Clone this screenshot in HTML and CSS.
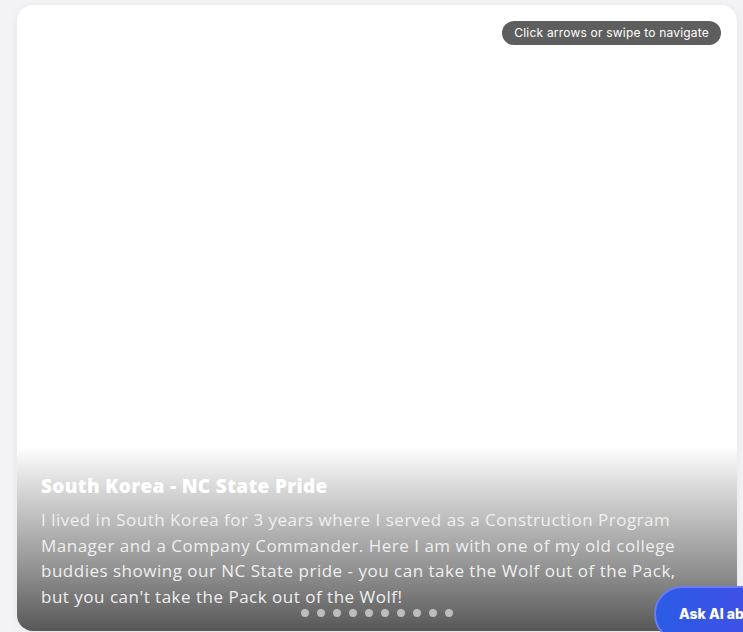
FILE: index.html
```html
<!DOCTYPE html>
<html>
<head>
<meta charset="utf-8">
<link rel="stylesheet" href="styles.css">
</head>
<body>
<div class="page">
  <div class="card">
    <div class="hint">Click arrows or swipe to navigate</div>
    <div class="caption">
      <h2 class="title">South Korea - NC State Pride</h2>
      <p class="desc">I lived in South Korea for 3 years where I served as a Construction Program Manager and a Company Commander. Here I am with one of my old college buddies showing our NC State pride - you can take the Wolf out of the Pack, but you can't take the Pack out of the Wolf!</p>
      <div class="dots">
        <span class="dot"></span><span class="dot"></span><span class="dot"></span><span class="dot"></span><span class="dot"></span><span class="dot"></span><span class="dot"></span><span class="dot"></span><span class="dot"></span><span class="dot"></span>
      </div>
    </div>
  </div>
  <button class="ask">Ask AI about this photo</button>
</div>
</body>
</html>
```
FILE: styles.css
```css
* { box-sizing: border-box; }
html, body { margin: 0; padding: 0; }
body {
  background: #f3f3f6;
  width: 743px;
  height: 632px;
  overflow: hidden;
  font-family: "Open Sans", "Liberation Sans", sans-serif;
}
.page {
  position: relative;
  height: 632px;
  padding: 5px 6px 0 17px;
}
.card {
  position: relative;
  background: #fff;
  border-radius: 16px;
  height: 626px;
  box-shadow: 0 2px 10px rgba(0,0,0,0.06);
  display: flex;
  flex-direction: column;
  justify-content: space-between;
  overflow: hidden;
}
.hint {
  align-self: flex-end;
  margin: 16px 16px 0 0;
  height: 24px;
  padding: 0 12px;
  border-radius: 12px;
  background: #5e5e5e;
  color: #fff;
  font-size: 12px;
  letter-spacing: 0.2px;
  line-height: 24px;
  font-family: "Inter", "Liberation Sans", sans-serif;
}
.caption {
  padding: 28px 56px 14px 24px;
  background: linear-gradient(to bottom, rgba(0,0,0,0) 0%, rgba(0,0,0,0.2) 30%, rgba(0,0,0,0.45) 70%, rgba(0,0,0,0.66) 100%);
  color: #f0f0f0;
  height: 185px;
}
.title {
  margin: 0 0 9px;
  font-size: 19px;
  font-weight: 800;
  letter-spacing: 0.35px;
  color: #fff;
  line-height: 24px;
  font-family: "Open Sans", "Liberation Sans", sans-serif;
}
.desc {
  margin: 0;
  font-size: 17px;
  letter-spacing: 0.5px;
  line-height: 25.7px;
  color: #efefef;
}
.dots {
  display: flex;
  justify-content: center;
  gap: 8px;
  margin: -1px -32px 0 0;
}
.dot {
  width: 8px;
  height: 8px;
  border-radius: 50%;
  background: #bdbdbd;
}
.ask {
  position: absolute;
  left: 654px;
  top: 586px;
  height: 56px;
  width: 220px;
  border-radius: 28px;
  border: 2px solid #6d7cf0;
  background: linear-gradient(90deg, #2b5ce4 0%, #5a40ea 100%);
  color: #fff;
  font-weight: 800;
  font-size: 14px;
  text-align: left;
  padding: 0 0 0 23px;
  font-family: "Inter", "Liberation Sans", sans-serif;
  line-height: 52px;
}
```
